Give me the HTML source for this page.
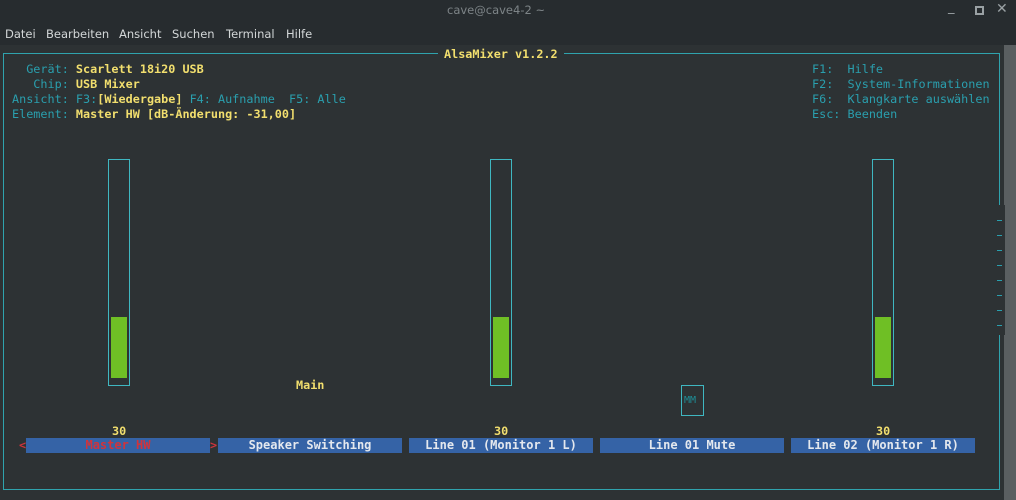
<!DOCTYPE html>
<html><head><meta charset="utf-8"><style>
*{margin:0;padding:0;box-sizing:border-box}
body{width:1016px;height:500px;overflow:hidden;background:#2d3234;font-family:"DejaVu Sans Mono","Liberation Mono",monospace;font-size:11.8px;position:relative}
.abs{position:absolute;white-space:pre;line-height:15px}
.c{color:#2a9fae}.y{color:#f2df6e;font-weight:bold}.w{color:#dfe6ea;font-weight:bold}
#top{position:absolute;left:0;top:0;width:1016px;height:45px;background:#272c2f}
.menu{position:absolute;top:27px;font-family:"DejaVu Sans","Liberation Sans",sans-serif;font-size:11.5px;color:#d3d7d8}
.bar{position:absolute;border:1px solid #3fb7c1;width:22px;top:159px;height:227px}
.g{position:absolute;background:#6fbf25;width:16px;top:317px;height:61px}
.lab{position:absolute;top:438px;height:15px;width:184px;background:#3563a6;text-align:center;line-height:15px;color:#e4e8ee;font-weight:bold;font-size:12px}
.num{position:absolute;top:423px;line-height:15px;color:#f2df6e;font-weight:bold}
.tick{position:absolute;left:997px;width:5px;height:1px;background:#2a9fae}
</style></head><body>
<div id="top"></div>
<div class="abs" style="left:447px;top:3px;color:#7d8487;font-family:'DejaVu Sans',sans-serif;font-size:11.5px">cave@cave4-2 ~</div>
<div class="abs" style="left:948px;top:0px;color:#9aa1a4;font-family:'DejaVu Sans',sans-serif;font-size:13px">_</div>
<div style="position:absolute;left:975px;top:6px;width:9px;height:9px;border:2px solid #9aa1a4"></div>
<div class="abs" style="left:996px;top:2px;color:#9aa1a4;font-family:'DejaVu Sans',sans-serif;font-size:14px">✕</div>
<div class="menu" style="left:5px">Datei</div>
<div class="menu" style="left:46px">Bearbeiten</div>
<div class="menu" style="left:119px">Ansicht</div>
<div class="menu" style="left:172px">Suchen</div>
<div class="menu" style="left:226px">Terminal</div>
<div class="menu" style="left:286px">Hilfe</div>
<div style="position:absolute;left:1004px;top:45px;width:12px;height:455px;background:#5a5f61"></div>
<div style="position:absolute;left:3px;top:53px;width:997px;height:437px;border:1px solid #2fa3ad"></div>
<div style="position:absolute;left:997px;top:205px;width:8px;height:130px;background:#2d3234"></div>
<div class="abs y" style="left:438px;top:47px;background:#2d3234;padding:0 6px">AlsaMixer v1.2.2</div>
<div class="abs" style="left:12px;top:62px"><span class="c">  Gerät: </span><span class="y">Scarlett 18i20 USB</span>
<span class="c">   Chip: </span><span class="y">USB Mixer</span>
<span class="c">Ansicht: F3:</span><span class="y">[Wiedergabe]</span><span class="c"> F4: Aufnahme  F5: Alle</span>
<span class="c">Element: </span><span class="y">Master HW [dB-Änderung: -31,00]</span></div>
<div class="abs c" style="left:812px;top:62px">F1:  Hilfe
F2:  System-Informationen
F6:  Klangkarte auswählen
Esc: Beenden</div>
<div class="bar" style="left:108px"></div><div class="g" style="left:111px"></div>
<div class="bar" style="left:490px"></div><div class="g" style="left:493px"></div>
<div class="bar" style="left:872px"></div><div class="g" style="left:875px"></div>
<div style="position:absolute;left:681px;top:385px;width:23px;height:31px;border:1px solid #3fb7c1"></div>
<div class="abs" style="left:684px;top:393px;color:#1f8d96;font-size:10px">MM</div>
<div class="abs y" style="left:296px;top:378px">Main</div>
<div class="num" style="left:112px;top:424px">30</div>
<div class="num" style="left:494px;top:424px">30</div>
<div class="num" style="left:876px;top:424px">30</div>
<div class="abs" style="left:19px;top:438px;color:#d0343c;font-weight:bold">&lt;</div>
<div class="abs" style="left:210px;top:438px;color:#d0343c;font-weight:bold">&gt;</div>
<div class="lab" style="left:26px;color:#d0343c">Master HW</div>
<div class="lab" style="left:218px">Speaker Switching</div>
<div class="lab" style="left:409px">Line 01 (Monitor 1 L)</div>
<div class="lab" style="left:600px">Line 01 Mute</div>
<div class="lab" style="left:791px">Line 02 (Monitor 1 R)</div>
<div class="tick" style="top:220px"></div>
<div class="tick" style="top:235px"></div>
<div class="tick" style="top:250px"></div>
<div class="tick" style="top:265px"></div>
<div class="tick" style="top:280px"></div>
<div class="tick" style="top:295px"></div>
<div class="tick" style="top:310px"></div>
<div class="tick" style="top:325px"></div>
</body></html>
